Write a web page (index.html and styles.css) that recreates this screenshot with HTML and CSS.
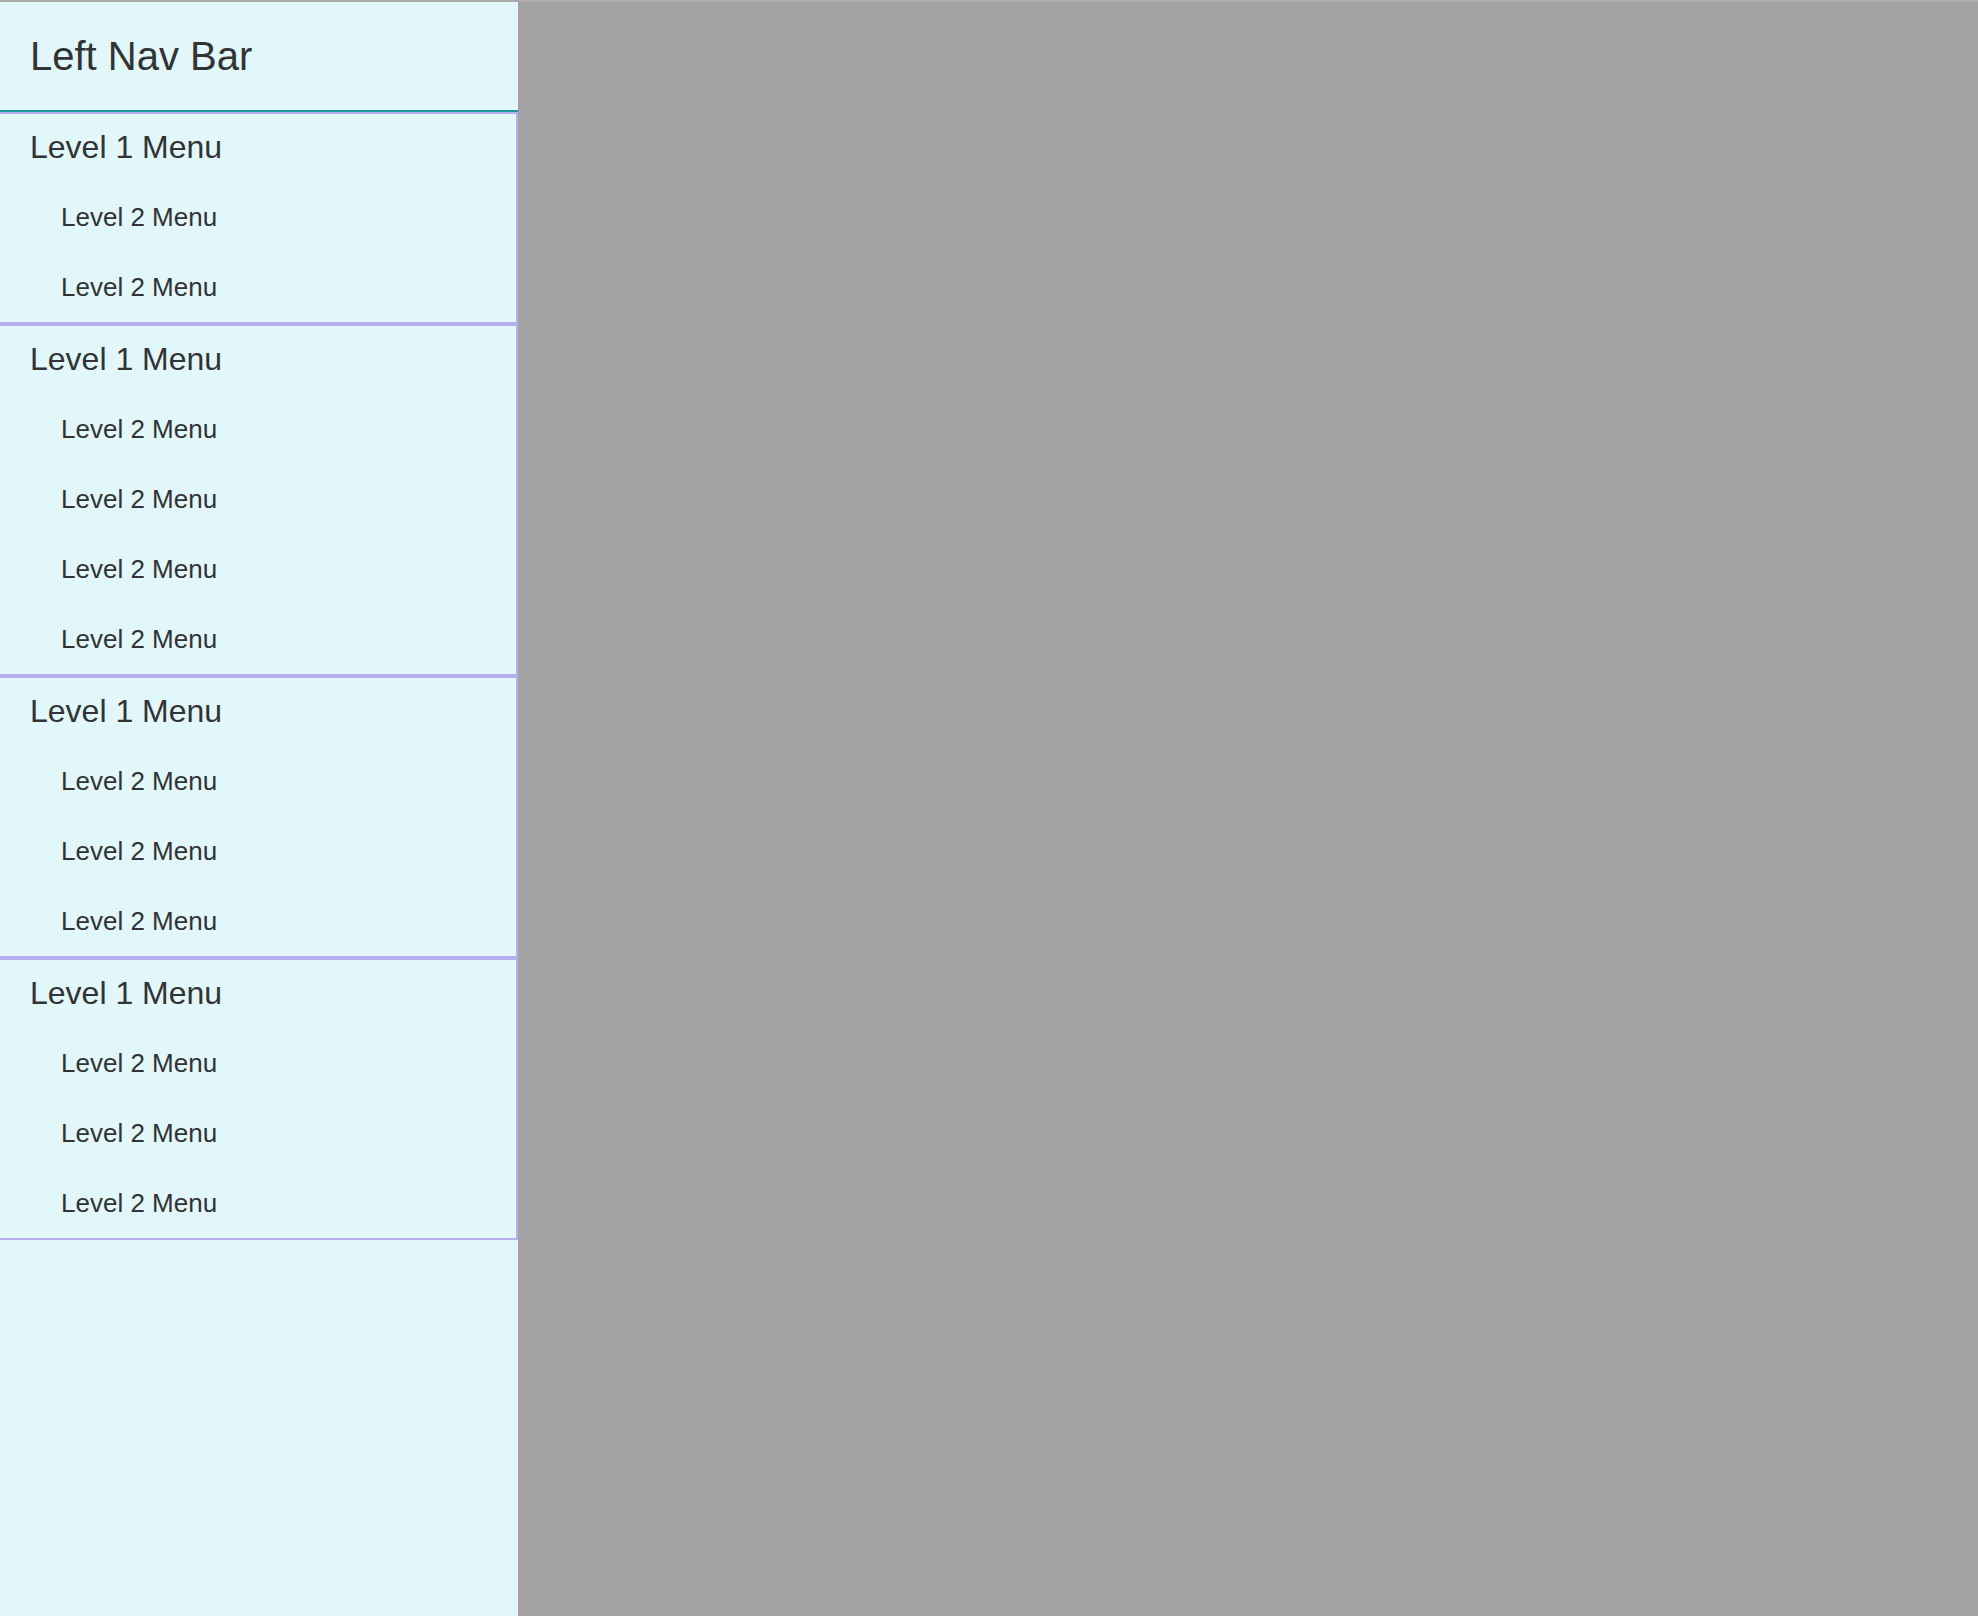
FILE: index.html
```html
<!doctype html>
<html>
<head>
    <meta charset="utf-8">
    <title>Left Nav Bar</title>
    <link rel="stylesheet" href="styles.css">
</head>
<body>
    <div class="leftNav">
        <div class="navTitle">Left Nav Bar</div>
        <ul class="menu">
            <li class="lv1">Level 1 Menu</li>
            <li class="lv2">Level 2 Menu</li>
            <li class="lv2">Level 2 Menu</li>
        </ul>
        <ul class="menu">
            <li class="lv1">Level 1 Menu</li>
            <li class="lv2">Level 2 Menu</li>
            <li class="lv2">Level 2 Menu</li>
            <li class="lv2">Level 2 Menu</li>
            <li class="lv2">Level 2 Menu</li>
        </ul>
        <ul class="menu">
            <li class="lv1">Level 1 Menu</li>
            <li class="lv2">Level 2 Menu</li>
            <li class="lv2">Level 2 Menu</li>
            <li class="lv2">Level 2 Menu</li>
        </ul>
        <ul class="menu">
            <li class="lv1">Level 1 Menu</li>
            <li class="lv2">Level 2 Menu</li>
            <li class="lv2">Level 2 Menu</li>
            <li class="lv2">Level 2 Menu</li>
        </ul>
    </div>
    <div class="content"></div>
</body>
</html>
```

FILE: styles.css
```css
html,
body,
ul {
    margin: 0px;
    padding: 0px;
}
html,
body {
    height: 100%;
}
body {
    box-sizing: border-box;
    border-top: 2px solid #ababab;
    display: flex;
    font-family: "Liberation Sans", Arial, sans-serif;
    color: #333;
    background: #a2a2a2;
}
li {
    list-style: none;
}
.leftNav {
    width: 518px;
    flex-shrink: 0;
    background: #e1f7fa;
}
.navTitle {
    height: 108px;
    line-height: 108px;
    padding-left: 30px;
    font-size: 40px;
    border-bottom: 2px solid #1d96a2;
}
/* 每组菜单只有上、右、下三条边 */
.menu {
    border: 2px solid #b5aff1;
    border-left: none;
}
.lv1 {
    font-size: 32px;
    line-height: 50px;
    padding: 8px 0px 10px 30px;
}
.lv2 {
    font-size: 26px;
    line-height: 70px;
    padding-left: 61px;
}
.content {
    flex: 1;
    background: #a2a2a2;
}
```
